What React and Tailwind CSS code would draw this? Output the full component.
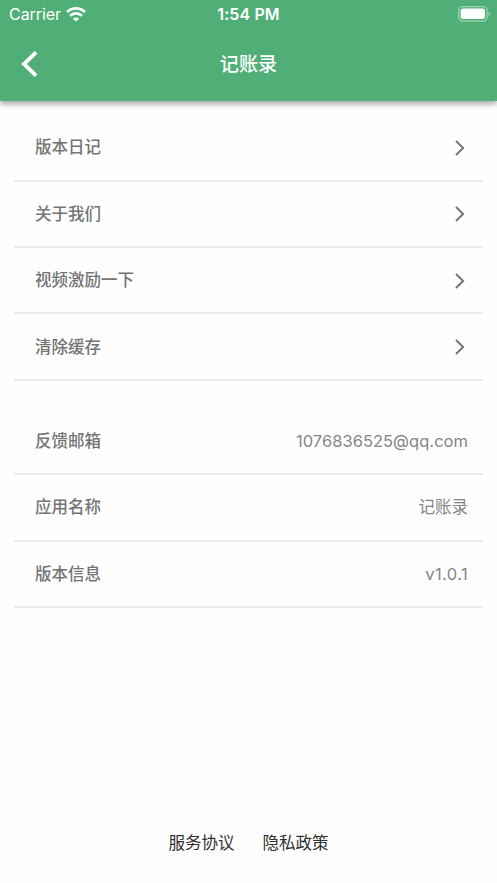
import React from 'react';

const menuItems = ['版本日记', '关于我们', '视频激励一下', '清除缓存'];

const infoItems = [
  { label: '反馈邮箱', value: '1076836525@qq.com', style: 'tracking-[0.03px]' },
  { label: '应用名称', value: '记账录', style: '' },
  { label: '版本信息', value: 'v1.0.1', style: 'tracking-[0.4px]' },
];

const WifiIcon = () => (
  <svg className="w-[20px] h-[15px]" viewBox="0 0 20 15" fill="none">
    <path d="M1.1 5.1 A12.6 12.6 0 0 1 18.9 5.1" stroke="white" strokeWidth="2.9" />
    <path d="M4.2 8.7 A8.2 8.2 0 0 1 15.8 8.7" stroke="white" strokeWidth="2.7" />
    <path d="M10 14.6 L6.9 11.7 A4.4 4.4 0 0 1 13.1 11.7 Z" fill="white" />
  </svg>
);

const BatteryIcon = () => (
  <svg className="w-[33px] h-[16px]" viewBox="0 0 33 16" fill="none">
    <rect x="0.7" y="0.7" width="28.4" height="14.4" rx="4" stroke="white" strokeOpacity="0.45" strokeWidth="1.3" />
    <rect x="2.6" y="2.6" width="24.3" height="10.4" rx="2.3" fill="white" />
    <path d="M30.7 5.3 C32.3 6 32.3 9.8 30.7 10.5 Z" fill="white" fillOpacity="0.5" />
  </svg>
);

const ArrowRight = () => (
  <svg className="mr-[18px] mt-px w-[10px] h-[16px]" viewBox="0 0 10 16" fill="none">
    <path d="M1 1 L8.1 8 L1 15" stroke="#757575" strokeWidth="2" />
  </svg>
);

const Row = ({ label, children }) => (
  <div className="flex justify-between items-center h-[66.4px] pl-[21px] border-b-2 border-[#ebebeb]">
    <span className="text-[16.5px] leading-6 font-medium text-[#747474]">{label}</span>
    {children}
  </div>
);

const App = () => {
  return (
    <div className="flex flex-col h-[883px] bg-[#fefefe] overflow-hidden font-[Inter,'Noto_Sans_CJK_SC',sans-serif]">
      <header className="h-[101px] shrink-0 bg-[#50af76] text-white shadow-[0_3px_6px_rgba(0,0,0,0.35)]">
        <div className="grid grid-cols-3 items-center h-[28px] pl-[9px] pr-[6px]">
          <div className="flex items-center gap-[5px]">
            <span className="text-[16px] tracking-[-0.05px]">Carrier</span>
            <WifiIcon />
          </div>
          <span className="text-center text-[16px] font-semibold tracking-[0.1px] pr-[3px]">1:54 PM</span>
          <div className="flex justify-end">
            <BatteryIcon />
          </div>
        </div>
        <div className="grid grid-cols-3 items-center h-[72px]">
          <button className="ml-[21px] w-[18px]">
            <svg className="w-[18px] h-[28px]" viewBox="0 0 18 28" fill="none">
              <path d="M15 2.3 L3 14 L15 25.7" stroke="white" strokeWidth="3.9" />
            </svg>
          </button>
          <h1 className="text-center text-[19.2px] font-medium">记账录</h1>
        </div>
      </header>

      <main className="flex-1 px-[14px] pt-[14.2px]">
        <section>
          {menuItems.map((item) => (
            <Row key={item} label={item}>
              <ArrowRight />
            </Row>
          ))}
        </section>
        <section className="mt-[28px]">
          {infoItems.map((item) => (
            <Row key={item.label} label={item.label}>
              <span className={`pr-[15px] pt-px text-[16.5px] text-[#858585] ${item.style}`}>
                {item.value}
              </span>
            </Row>
          ))}
        </section>
      </main>

      <footer className="flex justify-center gap-[28px] h-[52px] text-[16.5px] leading-6 text-[#303030]">
        <a>服务协议</a>
        <a>隐私政策</a>
      </footer>
    </div>
  );
};

export default App;
